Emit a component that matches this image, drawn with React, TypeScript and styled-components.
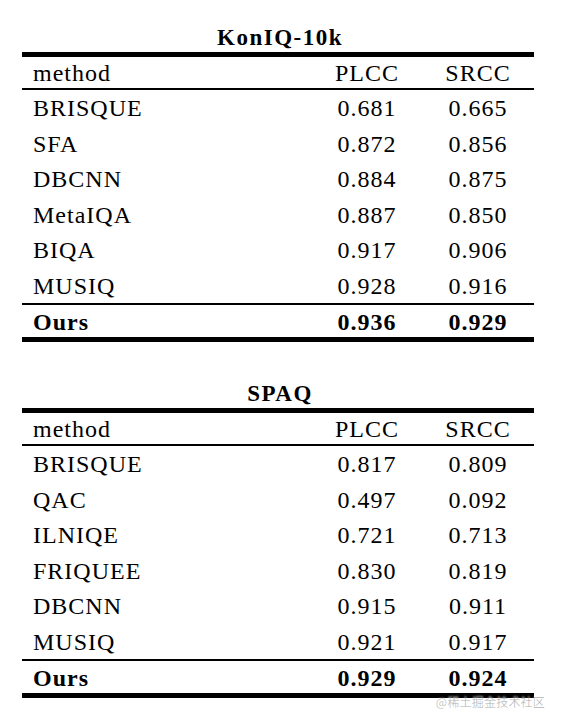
import React from 'react';
import styled, { createGlobalStyle } from 'styled-components';

const GlobalStyle = createGlobalStyle`
  html, body {
    margin: 0;
    padding: 0;
    background: #fff;
  }
`;

const Page = styled.div`
  position: relative;
  width: 564px;
  height: 725px;
  padding: 25px 30px 0 22px;
  box-sizing: border-box;
  font-family: "Liberation Serif", "Times New Roman", serif;
  color: #000;
  overflow: hidden;
`;

const Block = styled.section<{ gap: number }>`
  margin-top: ${p => p.gap}px;
`;

const Title = styled.div`
  text-align: center;
  font-size: 23px;
  font-weight: bold;
  letter-spacing: 1.5px;
  line-height: 26px;
  height: 26px;
  margin-bottom: 1px;
  padding-left: 4px;
`;

const Table = styled.div`
  width: 512px;
  border-top: 5px solid #000;
  border-bottom: 5px solid #000;
`;

const Row = styled.div<{ kind: 'head' | 'body' | 'best' }>`
  display: grid;
  grid-template-columns: 290px 110px 112px;
  font-size: 24px;
  letter-spacing: 1px;
  font-weight: ${p => (p.kind === 'best' ? 'bold' : 'normal')};
  line-height: ${p => (p.kind === 'body' ? '33.5px' : '29px')};
  padding-top: ${p => (p.kind === 'best' ? 3 : 2)}px;
  border-bottom: ${p => (p.kind === 'head' ? '2px solid #000' : 'none')};
  border-top: ${p => (p.kind === 'best' ? '2px solid #000' : 'none')};
  white-space: nowrap;
`;

const NameCell = styled.div`
  padding-left: 11px;
`;

const ScoreCell = styled.div`
  text-align: center;
`;

const Watermark = styled.div`
  position: absolute;
  right: 19px;
  top: 693px;
  font-family: "Noto Sans CJK SC", "Noto Sans", sans-serif;
  font-size: 12px;
  color: rgba(0, 0, 0, 0.26);
  text-shadow: 0 0 2px #fff;
  letter-spacing: 0.2px;
`;

type Result = { name: string; plcc: string; srcc: string };

const konIQ: Result[] = [
  { name: 'BRISQUE', plcc: '0.681', srcc: '0.665' },
  { name: 'SFA', plcc: '0.872', srcc: '0.856' },
  { name: 'DBCNN', plcc: '0.884', srcc: '0.875' },
  { name: 'MetaIQA', plcc: '0.887', srcc: '0.850' },
  { name: 'BIQA', plcc: '0.917', srcc: '0.906' },
  { name: 'MUSIQ', plcc: '0.928', srcc: '0.916' },
];

const spaq: Result[] = [
  { name: 'BRISQUE', plcc: '0.817', srcc: '0.809' },
  { name: 'QAC', plcc: '0.497', srcc: '0.092' },
  { name: 'ILNIQE', plcc: '0.721', srcc: '0.713' },
  { name: 'FRIQUEE', plcc: '0.830', srcc: '0.819' },
  { name: 'DBCNN', plcc: '0.915', srcc: '0.911' },
  { name: 'MUSIQ', plcc: '0.921', srcc: '0.917' },
];

const ResultTable = ({ title, rows, ours, gap }: { title: string; rows: Result[]; ours: Result; gap: number }) => (
  <Block gap={gap}>
    <Title>{title}</Title>
    <Table>
      <Row kind="head">
        <NameCell>method</NameCell>
        <ScoreCell>PLCC</ScoreCell>
        <ScoreCell>SRCC</ScoreCell>
      </Row>
      {rows.map(r => (
        <Row kind="body" key={r.name}>
          <NameCell>{r.name}</NameCell>
          <ScoreCell>{r.plcc}</ScoreCell>
          <ScoreCell>{r.srcc}</ScoreCell>
        </Row>
      ))}
      <Row kind="best">
        <NameCell>{ours.name}</NameCell>
        <ScoreCell>{ours.plcc}</ScoreCell>
        <ScoreCell>{ours.srcc}</ScoreCell>
      </Row>
    </Table>
  </Block>
);

const App = () => {
  return (
    <>
      <GlobalStyle />
      <Page>
        <ResultTable title="KonIQ-10k" rows={konIQ} ours={{ name: 'Ours', plcc: '0.936', srcc: '0.929' }} gap={0} />
        <ResultTable title="SPAQ" rows={spaq} ours={{ name: 'Ours', plcc: '0.929', srcc: '0.924' }} gap={39} />
        <Watermark>@稀土掘金技术社区</Watermark>
      </Page>
    </>
  );
};

export default App;
